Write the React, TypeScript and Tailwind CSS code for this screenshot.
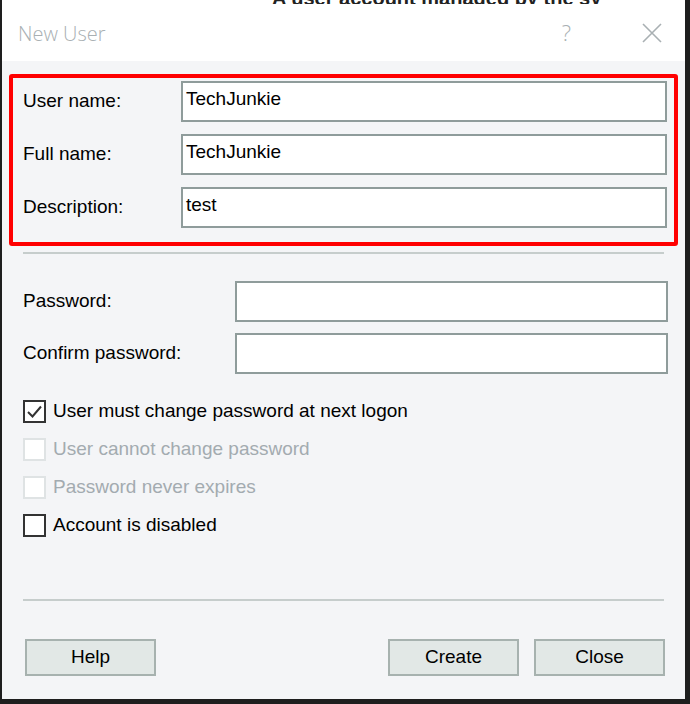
const font = { fontFamily: '"Liberation Sans", Arial, sans-serif' };

function Field({ label, value, labelW }: { label: string; value?: string; labelW: string }) {
  return (
    <div className="flex items-center">
      <div className={`${labelW} shrink-0 text-[19px] text-black`}>{label}</div>
      <div className="flex h-[41px] flex-1 items-center border-2 border-[#8f9c9b] bg-white px-[3px] pb-[4px] text-[19px] text-black">
        {value}
      </div>
    </div>
  );
}

function Check({ label, checked, disabled }: { label: string; checked?: boolean; disabled?: boolean }) {
  return (
    <div className="flex h-[38px] items-center gap-[7px]">
      <div
        className={`flex h-[23px] w-[23px] items-center justify-center border-2 bg-white ${
          disabled ? 'border-[#dfe3e4]' : 'border-[#333]'
        }`}
      >
        {checked && (
          <svg width="17" height="17" viewBox="0 0 17 17" fill="none">
            <path d="M2 9 L6.5 13.5 L15 3.5" stroke="#333" strokeWidth="2" />
          </svg>
        )}
      </div>
      <span className={`text-[19px] ${disabled ? 'text-[#a3abb0]' : 'text-black'}`}>{label}</span>
    </div>
  );
}

function Button({ label }: { label: string }) {
  return (
    <div className="flex h-[37px] w-[131px] items-center justify-center border-2 border-[#a7b2af] bg-[#e2e8e6] text-[19px] text-black">
      {label}
    </div>
  );
}

export default function App() {
  return (
    <div className="h-[704px] w-[690px] overflow-hidden bg-[#1e1e1e] pb-[5px] pl-[2px] pr-[5px]" style={font}>
      <div className="h-[4px] overflow-hidden bg-white">
        <div className="-mt-[17px] ml-[270px] whitespace-nowrap text-[20px] font-bold text-[#222]">
          A user account managed by the sy
        </div>
      </div>
      <div className="flex h-[695px] flex-col bg-[#f4f5f7]">
        <div className="flex h-[57px] items-center bg-white pl-[16px] text-[#a9b0b3]" style={{ fontFamily: '"Open Sans", sans-serif' }}>
          <span className="flex-1 pt-[2px] text-[20px] font-light">New User</span>
          <span className="mr-[70px] text-[22px] font-light">?</span>
          <svg className="mr-[22px]" width="22" height="22" viewBox="0 0 22 22" fill="none">
            <path d="M2 2 L20 20 M20 2 L2 20" stroke="#a9b0b3" strokeWidth="1.6" />
          </svg>
        </div>

        <div className="px-[7px] pt-[13px]">
          <div className="flex flex-col gap-[12px] rounded-[3px] border-[4px] border-[#ff0000] pb-[14px] pl-[10px] pr-[7px] pt-[3px]">
            <Field label="User name:" value="TechJunkie" labelW="w-[158px]" />
            <Field label="Full name:" value="TechJunkie" labelW="w-[158px]" />
            <Field label="Description:" value="test" labelW="w-[158px]" />
          </div>
        </div>

        <div className="mx-[21px] mt-[6px] h-[2px] bg-[#c6cdcc]" />

        <div className="flex flex-col gap-[11px] pl-[21px] pr-[17px] pt-[27px]">
          <Field label="Password:" labelW="w-[212px]" />
          <Field label="Confirm password:" labelW="w-[212px]" />
        </div>

        <div className="flex flex-col pl-[21px] pt-[18px]">
          <Check label="User must change password at next logon" checked />
          <Check label="User cannot change password" disabled />
          <Check label="Password never expires" disabled />
          <Check label="Account is disabled" />
        </div>

        <div className="mx-[21px] mt-[55px] h-[2px] bg-[#c6cdcc]" />

        <div className="flex pl-[23px] pr-[20px] pt-[38px]">
          <Button label="Help" />
          <div className="flex-1" />
          <div className="flex gap-[15px]">
            <Button label="Create" />
            <Button label="Close" />
          </div>
        </div>
      </div>
    </div>
  );
}
